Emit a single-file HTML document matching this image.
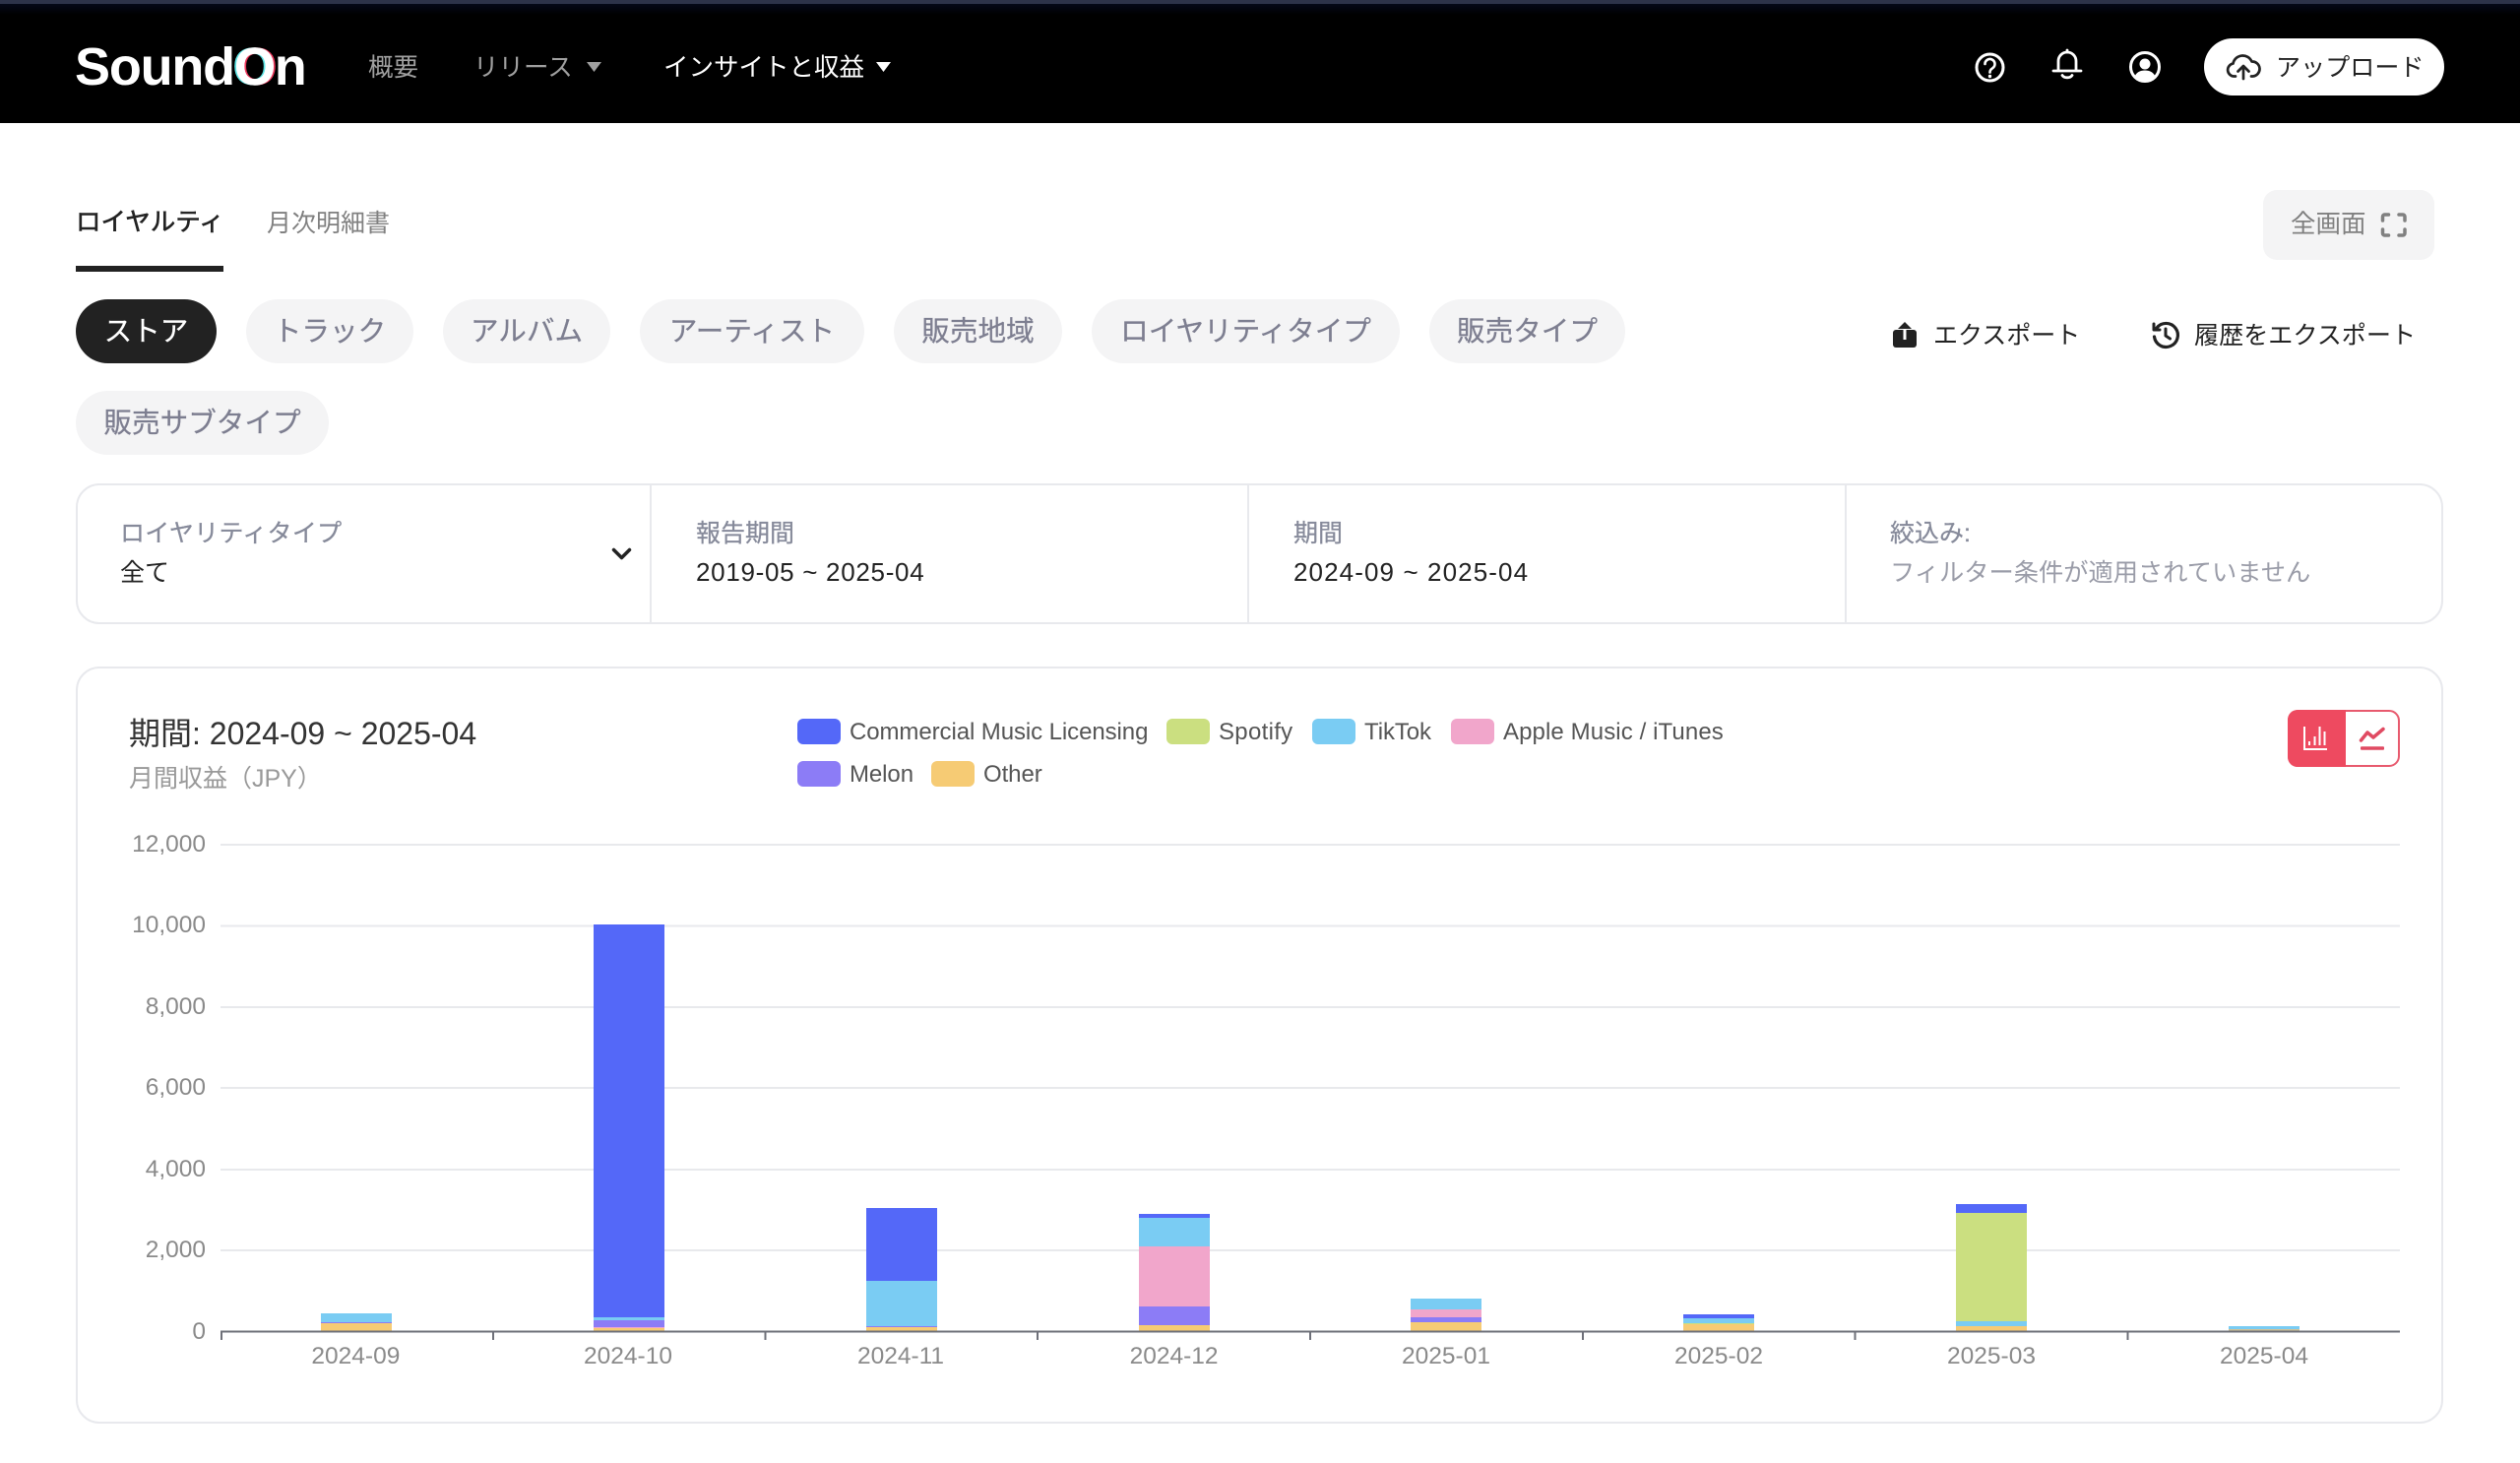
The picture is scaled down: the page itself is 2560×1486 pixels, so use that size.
<!DOCTYPE html>
<html lang="ja">
<head>
<meta charset="utf-8">
<title>SoundOn</title>
<style>
html,body{margin:0;padding:0;background:#fff;width:2560px;height:1486px;overflow:hidden}
body{position:relative;font-family:"Liberation Sans","Noto Sans CJK JP",sans-serif;color:#222}
.t{position:absolute;white-space:nowrap;line-height:40px;height:40px;font-size:25px}
.hd{position:absolute;left:0;top:0;width:2560px;height:125px;background:#000}
.hd:before{content:"";position:absolute;left:0;top:0;width:100%;height:15px;background:linear-gradient(#060b20,#000)}
.hd:after{content:"";position:absolute;left:0;top:0;width:100%;height:3.5px;background:#2d3349}
.box{position:absolute;box-sizing:border-box;border:2px solid #e8e9ed;background:#fff}
.pill{position:absolute;height:65px;line-height:67px;border-radius:33px;background:#f4f4f5;color:#7d7e90;font-size:28.600px;text-align:center;white-space:nowrap;-webkit-text-stroke:.25px currentColor}
.sw{position:absolute;width:44px;height:26px;border-radius:6px}
.g{color:#868a9a;-webkit-text-stroke:.25px currentColor}
.ax{color:#8a8a8a;font-size:24.5px}
.lg{color:#555;font-size:24px;letter-spacing:-.08px}
svg{position:absolute;left:0;top:0}
.logo{position:absolute;left:76px;top:28px;font-weight:700;font-size:54px;line-height:80px;color:#fff;white-space:nowrap;letter-spacing:-1.2px}
.logo b{color:#fff;text-shadow:-2px 0 0 #5fe6e6,2px 0 0 #ee3a5e;font-weight:700;-webkit-text-stroke:.5px #fff}
</style>
</head>
<body>
<div class="hd"></div>
<div class="logo">Sound<b>O</b>n</div>
<div class="t" style="left:374px;top:49px;color:#a0a0a0;font-size:25.500px">概要</div>
<div class="t" style="left:481px;top:49px;color:#a0a0a0;font-size:25.500px">リリース</div>
<div class="t" style="left:674px;top:49px;color:#fff;font-size:25.500px">インサイトと収益</div>
<div style="position:absolute;left:2239px;top:39px;width:244px;height:58px;border-radius:29px;background:#fff"></div>
<div class="t" style="left:2312px;top:49px;color:#222;font-size:25px;letter-spacing:.1px">アップロード</div>

<div class="t" style="left:77px;top:206px;color:#222;font-size:25.500px;-webkit-text-stroke:.6px #222">ロイヤルティ</div>
<div class="t" style="left:271px;top:207px;color:#808080;font-size:25px">月次明細書</div>
<div style="position:absolute;left:77px;top:270px;width:150px;height:6px;background:#222"></div>

<div class="pill" style="left:77px;top:304px;width:143px;background:#222;color:#fff">ストア</div>
<div class="pill" style="left:250px;top:304px;width:170px">トラック</div>
<div class="pill" style="left:450px;top:304px;width:170px">アルバム</div>
<div class="pill" style="left:650px;top:304px;width:228px">アーティスト</div>
<div class="pill" style="left:908px;top:304px;width:171px">販売地域</div>
<div class="pill" style="left:1109px;top:304px;width:313px">ロイヤリティタイプ</div>
<div class="pill" style="left:1452px;top:304px;width:199px">販売タイプ</div>
<div class="pill" style="left:77px;top:397px;width:257px">販売サブタイプ</div>

<div style="position:absolute;left:2299px;top:193px;width:174px;height:71px;border-radius:14px;background:#f4f4f5"></div>
<div class="t" style="left:2327px;top:208px;color:#808080;font-size:25.500px">全画面</div>
<div class="t" style="left:1964px;top:321px">エクスポート</div>
<div class="t" style="left:2229px;top:321px;font-size:25.100px">履歴をエクスポート</div>

<div class="box" style="left:77px;top:491px;width:2405px;height:143px;border-radius:24px"></div>
<div style="position:absolute;left:660px;top:492px;width:2px;height:141px;background:#e8e9ed"></div>
<div style="position:absolute;left:1267px;top:492px;width:2px;height:141px;background:#e8e9ed"></div>
<div style="position:absolute;left:1874px;top:492px;width:2px;height:141px;background:#e8e9ed"></div>
<div class="t g" style="left:122px;top:522px;letter-spacing:.3px">ロイヤリティタイプ</div>
<div class="t" style="left:122px;top:562px">全て</div>
<div class="t g" style="left:707px;top:522px">報告期間</div>
<div class="t" style="left:707px;top:561px;font-size:26px;letter-spacing:.7px">2019-05 ~ 2025-04</div>
<div class="t g" style="left:1314px;top:522px">期間</div>
<div class="t" style="left:1314px;top:561px;font-size:26px;letter-spacing:1.100px">2024-09 ~ 2025-04</div>
<div class="t g" style="left:1920px;top:522px">絞込み:</div>
<div class="t" style="left:1920px;top:562px;color:#9a9ca8;font-size:25.250px">フィルター条件が適用されていません</div>

<div class="box" style="left:77px;top:677px;width:2405px;height:769px;border-radius:24px"></div>
<div class="t" style="left:131px;top:725px;font-size:32px;color:#333">期間: 2024-09 ~ 2025-04</div>
<div class="t" style="left:131px;top:771px;color:#999;font-size:25px">月間収益（JPY）</div>

<div class="sw" style="left:810px;top:730px;background:#5468f8"></div>
<div class="t lg" style="left:863px;top:724px">Commercial Music Licensing</div>
<div class="sw" style="left:1185px;top:730px;background:#cbdf80"></div>
<div class="t lg" style="left:1238px;top:724px;letter-spacing:.3px">Spotify</div>
<div class="sw" style="left:1333px;top:730px;background:#7accf3"></div>
<div class="t lg" style="left:1386px;top:724px">TikTok</div>
<div class="sw" style="left:1474px;top:730px;background:#f1a6cb"></div>
<div class="t lg" style="left:1527px;top:724px;letter-spacing:.1px">Apple Music / iTunes</div>
<div class="sw" style="left:810px;top:773px;background:#8c7cf6"></div>
<div class="t lg" style="left:863px;top:767px">Melon</div>
<div class="sw" style="left:946px;top:773px;background:#f6cb74"></div>
<div class="t lg" style="left:999px;top:767px">Other</div>

<div class="t ax" style="right:2351px;top:838px">12,000</div>
<div class="t ax" style="right:2351px;top:920px">10,000</div>
<div class="t ax" style="right:2351px;top:1003px">8,000</div>
<div class="t ax" style="right:2351px;top:1085px">6,000</div>
<div class="t ax" style="right:2351px;top:1168px">4,000</div>
<div class="t ax" style="right:2351px;top:1250px">2,000</div>
<div class="t ax" style="right:2351px;top:1333px">0</div>
<div class="t ax" style="left:261.400px;width:200px;text-align:center;top:1358px">2024-09</div>
<div class="t ax" style="left:538px;width:200px;text-align:center;top:1358px">2024-10</div>
<div class="t ax" style="left:815px;width:200px;text-align:center;top:1358px">2024-11</div>
<div class="t ax" style="left:1092.600px;width:200px;text-align:center;top:1358px">2024-12</div>
<div class="t ax" style="left:1369px;width:200px;text-align:center;top:1358px">2025-01</div>
<div class="t ax" style="left:1646px;width:200px;text-align:center;top:1358px">2025-02</div>
<div class="t ax" style="left:1923px;width:200px;text-align:center;top:1358px">2025-03</div>
<div class="t ax" style="left:2200px;width:200px;text-align:center;top:1358px">2025-04</div>

<svg width="2560" height="1486" viewBox="0 0 2560 1486" fill="none">
  <!-- nav triangles -->
  <path d="M596 63h15l-7.500 10z" fill="#a0a0a0"/>
  <path d="M890 63h15l-7.500 10z" fill="#fff"/>
  <!-- help -->
  <ellipse cx="2021.500" cy="68.500" rx="13.500" ry="13.500" stroke="#fff" stroke-width="3"/>
  <path d="M2016.500 65a5 5 0 1 1 8 4c-2 1.500-3 2.300-3 4.500" stroke="#fff" stroke-width="2.600" stroke-linecap="round"/>
  <circle cx="2021.500" cy="77.500" r="1.700" fill="#fff"/>
  <!-- bell -->
  <path d="M2091 72V62a9 9 0 0 1 18 0v10M2086 72h28" stroke="#fff" stroke-width="2.800" stroke-linecap="round"/>
  <path d="M2100 53v-2" stroke="#fff" stroke-width="2.800" stroke-linecap="round"/>
  <path d="M2095 76.500a5.500 4 0 0 0 10 0" stroke="#fff" stroke-width="2.800" stroke-linecap="round"/>
  <!-- user -->
  <circle cx="2179" cy="68" r="14.500" stroke="#fff" stroke-width="3"/>
  <circle cx="2179" cy="65" r="5.500" fill="#fff"/>
  <path d="M2168.500 78c1.500-4.500 5.500-6.500 10.500-6.500s9 2 10.500 6.500a14 14 0 0 1-21 0z" fill="#fff"/>
  <!-- cloud upload -->
  <path d="M2271 77.500h-1.500a6.500 6.500 0 0 1-1-12.900 10 10 0 0 1 19-2.100 7.500 7.500 0 0 1 1 15h-1.500" stroke="#222" stroke-width="2.700" stroke-linecap="round" stroke-linejoin="round"/>
  <path d="M2279 80V67M2273.500 72.500l5.500-5.500 5.500 5.500" stroke="#222" stroke-width="2.700" stroke-linecap="round" stroke-linejoin="round"/>
  <!-- fullscreen -->
  <path d="M2420.500 224v-4a2 2 0 0 1 2-2h4M2437 218h4a2 2 0 0 1 2 2v4M2443 233v4a2 2 0 0 1-2 2h-4M2426.500 239h-4a2 2 0 0 1-2-2v-4" stroke="#808080" stroke-width="3.500" stroke-linecap="round"/>
  <!-- export -->
  <rect x="1923" y="335" width="24" height="18" rx="3" fill="#222"/>
  <path d="M1935 327l7 7h-14z" fill="#222"/>
  <rect x="1933.500" y="334" width="3" height="11" fill="#fff"/>
  <!-- history -->
  <path d="M2191 333a12 12 0 1 1-2.500 9" stroke="#222" stroke-width="3.200" stroke-linecap="round"/>
  <path d="M2188 329v6h6" stroke="#222" stroke-width="3" stroke-linecap="round" stroke-linejoin="round"/>
  <path d="M2200 334v7l4.500 3" stroke="#222" stroke-width="3" stroke-linecap="round" stroke-linejoin="round"/>
  <!-- chevron -->
  <path d="M623.500 558.500l8 8 8-8" stroke="#222" stroke-width="3.500" stroke-linecap="round" stroke-linejoin="round"/>
  <!-- toggle -->
  <rect x="2325" y="722" width="112" height="56" rx="10" fill="#fff" stroke="#e85a6e" stroke-width="2"/>
  <path d="M2383 721h-49a10 10 0 0 0-10 10v38a10 10 0 0 0 10 10h49z" fill="#ee4a60"/>
  <path d="M2341 738V761H2364" stroke="#fff" stroke-width="2"/>
  <path d="M2346 757v-4M2351.500 757v-9M2356.500 757v-19M2361.500 757v-14" stroke="#fff" stroke-width="2"/>
  <path d="M2398.500 752l6.500-8 6 5 10-8.500" stroke="#e04a62" stroke-width="3.500" stroke-linecap="round" stroke-linejoin="round"/>
  <rect x="2398" y="758.300" width="24" height="3.400" rx="1" fill="#e04a62"/>
  <!-- grid -->
  <g stroke="#e8e9ec" stroke-width="2">
    <path d="M224 858H2438M224 940.500H2438M224 1023H2438M224 1105H2438M224 1188H2438M224 1270H2438"/>
  </g>
  <!-- bars -->
  <g shape-rendering="crispEdges">
    <rect x="326" y="1334" width="72" height="9" fill="#7accf3"/>
    <rect x="326" y="1343" width="72" height="1" fill="#8c7cf6"/>
    <rect x="326" y="1344" width="72" height="9" fill="#f6cb74"/>

    <rect x="603" y="939" width="72" height="399" fill="#5468f8"/>
    <rect x="603" y="1338" width="72" height="3" fill="#7accf3"/>
    <rect x="603" y="1341" width="72" height="7" fill="#8c7cf6"/>
    <rect x="603" y="1348" width="72" height="1" fill="#f1a6cb"/>
    <rect x="603" y="1349" width="72" height="4" fill="#f6cb74"/>

    <rect x="880" y="1227" width="72" height="74" fill="#5468f8"/>
    <rect x="880" y="1301" width="72" height="46" fill="#7accf3"/>
    <rect x="880" y="1347" width="72" height="1" fill="#8c7cf6"/>
    <rect x="880" y="1348" width="72" height="5" fill="#f6cb74"/>

    <rect x="1157" y="1233" width="72" height="4" fill="#5468f8"/>
    <rect x="1157" y="1237" width="72" height="29" fill="#7accf3"/>
    <rect x="1157" y="1266" width="72" height="61" fill="#f1a6cb"/>
    <rect x="1157" y="1327" width="72" height="19" fill="#8c7cf6"/>
    <rect x="1157" y="1346" width="72" height="7" fill="#f6cb74"/>

    <rect x="1433" y="1319" width="72" height="11" fill="#7accf3"/>
    <rect x="1433" y="1330" width="72" height="8" fill="#f1a6cb"/>
    <rect x="1433" y="1338" width="72" height="5" fill="#8c7cf6"/>
    <rect x="1433" y="1343" width="72" height="10" fill="#f6cb74"/>

    <rect x="1710" y="1335" width="72" height="4" fill="#5468f8"/>
    <rect x="1710" y="1339" width="72" height="5" fill="#7accf3"/>
    <rect x="1710" y="1344" width="72" height="1" fill="#cbdf80"/>
    <rect x="1710" y="1345" width="72" height="8" fill="#f6cb74"/>

    <rect x="1987" y="1223" width="72" height="9" fill="#5468f8"/>
    <rect x="1987" y="1232" width="72" height="110" fill="#cbdf80"/>
    <rect x="1987" y="1342" width="72" height="5" fill="#7accf3"/>
    <rect x="1987" y="1347" width="72" height="6" fill="#f6cb74"/>

    <rect x="2264" y="1347" width="72" height="3" fill="#7accf3"/>
    <rect x="2264" y="1350" width="72" height="3" fill="#cfc39a"/>
  </g>
  <!-- axis -->
  <path d="M224 1352.500H2438" stroke="#6e7079" stroke-width="2"/>
  <path d="M225 1352v9M501 1352v9M777.500 1352v9M1054 1352v9M1331 1352v9M1608 1352v9M1884.500 1352v9M2161.500 1352v9" stroke="#6e7079" stroke-width="2"/>
</svg>
</body>
</html>
